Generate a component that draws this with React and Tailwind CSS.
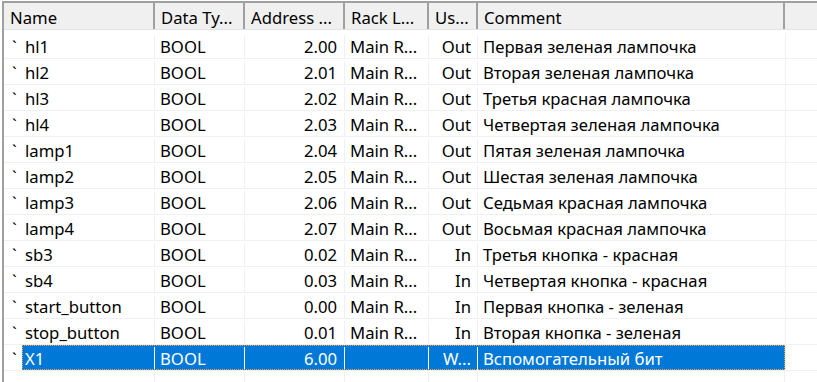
const rows = [
  { name: 'hl1', type: 'BOOL', addr: '2.00', rack: 'Main R...', use: 'Out', comment: 'Первая зеленая лампочка' },
  { name: 'hl2', type: 'BOOL', addr: '2.01', rack: 'Main R...', use: 'Out', comment: 'Вторая зеленая лампочка' },
  { name: 'hl3', type: 'BOOL', addr: '2.02', rack: 'Main R...', use: 'Out', comment: 'Третья красная лампочка' },
  { name: 'hl4', type: 'BOOL', addr: '2.03', rack: 'Main R...', use: 'Out', comment: 'Четвертая зеленая лампочка' },
  { name: 'lamp1', type: 'BOOL', addr: '2.04', rack: 'Main R...', use: 'Out', comment: 'Пятая зеленая лампочка' },
  { name: 'lamp2', type: 'BOOL', addr: '2.05', rack: 'Main R...', use: 'Out', comment: 'Шестая зеленая лампочка' },
  { name: 'lamp3', type: 'BOOL', addr: '2.06', rack: 'Main R...', use: 'Out', comment: 'Седьмая красная лампочка' },
  { name: 'lamp4', type: 'BOOL', addr: '2.07', rack: 'Main R...', use: 'Out', comment: 'Восьмая красная лампочка' },
  { name: 'sb3', type: 'BOOL', addr: '0.02', rack: 'Main R...', use: 'In', comment: 'Третья кнопка - красная' },
  { name: 'sb4', type: 'BOOL', addr: '0.03', rack: 'Main R...', use: 'In', comment: 'Четвертая кнопка - красная' },
  { name: 'start_button', type: 'BOOL', addr: '0.00', rack: 'Main R...', use: 'In', comment: 'Первая кнопка - зеленая' },
  { name: 'stop_button', type: 'BOOL', addr: '0.01', rack: 'Main R...', use: 'In', comment: 'Вторая кнопка - зеленая' },
  { name: 'X1', type: 'BOOL', addr: '6.00', rack: '', use: 'W...', comment: 'Вспомогательный бит', selected: true },
]

function HeaderCell({ w, children }) {
  return (
    <div className={`${w} shrink-0 h-full flex items-center pl-[6px] pt-[3px] border-r-2 border-[#a0a0a0] whitespace-nowrap overflow-hidden`}>
      {children}
    </div>
  )
}

function Row({ r }) {
  const sel = r.selected
  const line = sel ? 'border-white' : 'border-[#f0f0f0]'
  const text = sel ? 'text-white' : 'text-black'
  return (
    <div className="flex h-[26px] border-b border-[#f0f0f0]">
      <div className="w-[18px] shrink-0 flex items-center pl-[8px] pt-[2px] text-black">`</div>
      <div className={`flex flex-1 h-full pt-[2px] ${sel ? 'bg-[#0078d7] outline-1 outline-dotted outline-[#f0a050] -outline-offset-1' : ''} ${text}`}>
        <div className={`w-[133px] shrink-0 flex items-center pl-[3px] border-r ${line}`}>{r.name}</div>
        <div className={`w-[90px] shrink-0 flex items-center pl-[5px] border-r ${line}`}>{r.type}</div>
        <div className={`w-[100px] shrink-0 flex items-center justify-end pr-[7px] border-r ${line}`}>{r.addr}</div>
        <div className={`w-[84px] shrink-0 flex items-center pl-[5px] border-r ${line} whitespace-nowrap overflow-hidden`}>{r.rack}</div>
        <div className={`w-[49px] shrink-0 flex items-center justify-end pr-[6px] border-r ${line}`}>{r.use}</div>
        <div className="w-[306px] shrink-0 flex items-center pl-[5px] whitespace-nowrap">{r.comment}</div>
      </div>
      <div className="w-[32px] shrink-0 border-l border-[#f0f0f0] bg-white" />
    </div>
  )
}

export default function App() {
  return (
    <div
      className="w-[817px] h-[382px] bg-white overflow-hidden pl-[2px] pt-[1px] text-[16.7px] text-black"
      style={{ fontFamily: '"Noto Sans", "Open Sans", sans-serif' }}
    >
      <div className="h-full border-l-2 border-t-2 border-[#a0a0a0]">
        {/* Header */}
        <div className="flex h-[27px] bg-[#f0f0f0] border-b border-[#e3e3e3]">
          <HeaderCell w="w-[151px]">Name</HeaderCell>
          <HeaderCell w="w-[90px]">Data Ty...</HeaderCell>
          <HeaderCell w="w-[100px]">Address ...</HeaderCell>
          <HeaderCell w="w-[84px]">Rack L...</HeaderCell>
          <HeaderCell w="w-[49px]">Us...</HeaderCell>
          <HeaderCell w="w-[307px]">Comment</HeaderCell>
          <div className="flex-1" />
        </div>
        <div className="h-[3px]" />
        {/* Rows */}
        {rows.map(r => (
          <Row key={r.name} r={r} />
        ))}
        <div className="flex h-full">
          <div className="w-[151px] shrink-0 border-r border-[#f0f0f0]" />
          <div className="w-[90px] shrink-0 border-r border-[#f0f0f0]" />
          <div className="w-[100px] shrink-0 border-r border-[#f0f0f0]" />
          <div className="w-[84px] shrink-0 border-r border-[#f0f0f0]" />
          <div className="w-[49px] shrink-0 border-r border-[#f0f0f0]" />
          <div className="w-[307px] shrink-0 border-r border-[#f0f0f0]" />
        </div>
      </div>
    </div>
  )
}
